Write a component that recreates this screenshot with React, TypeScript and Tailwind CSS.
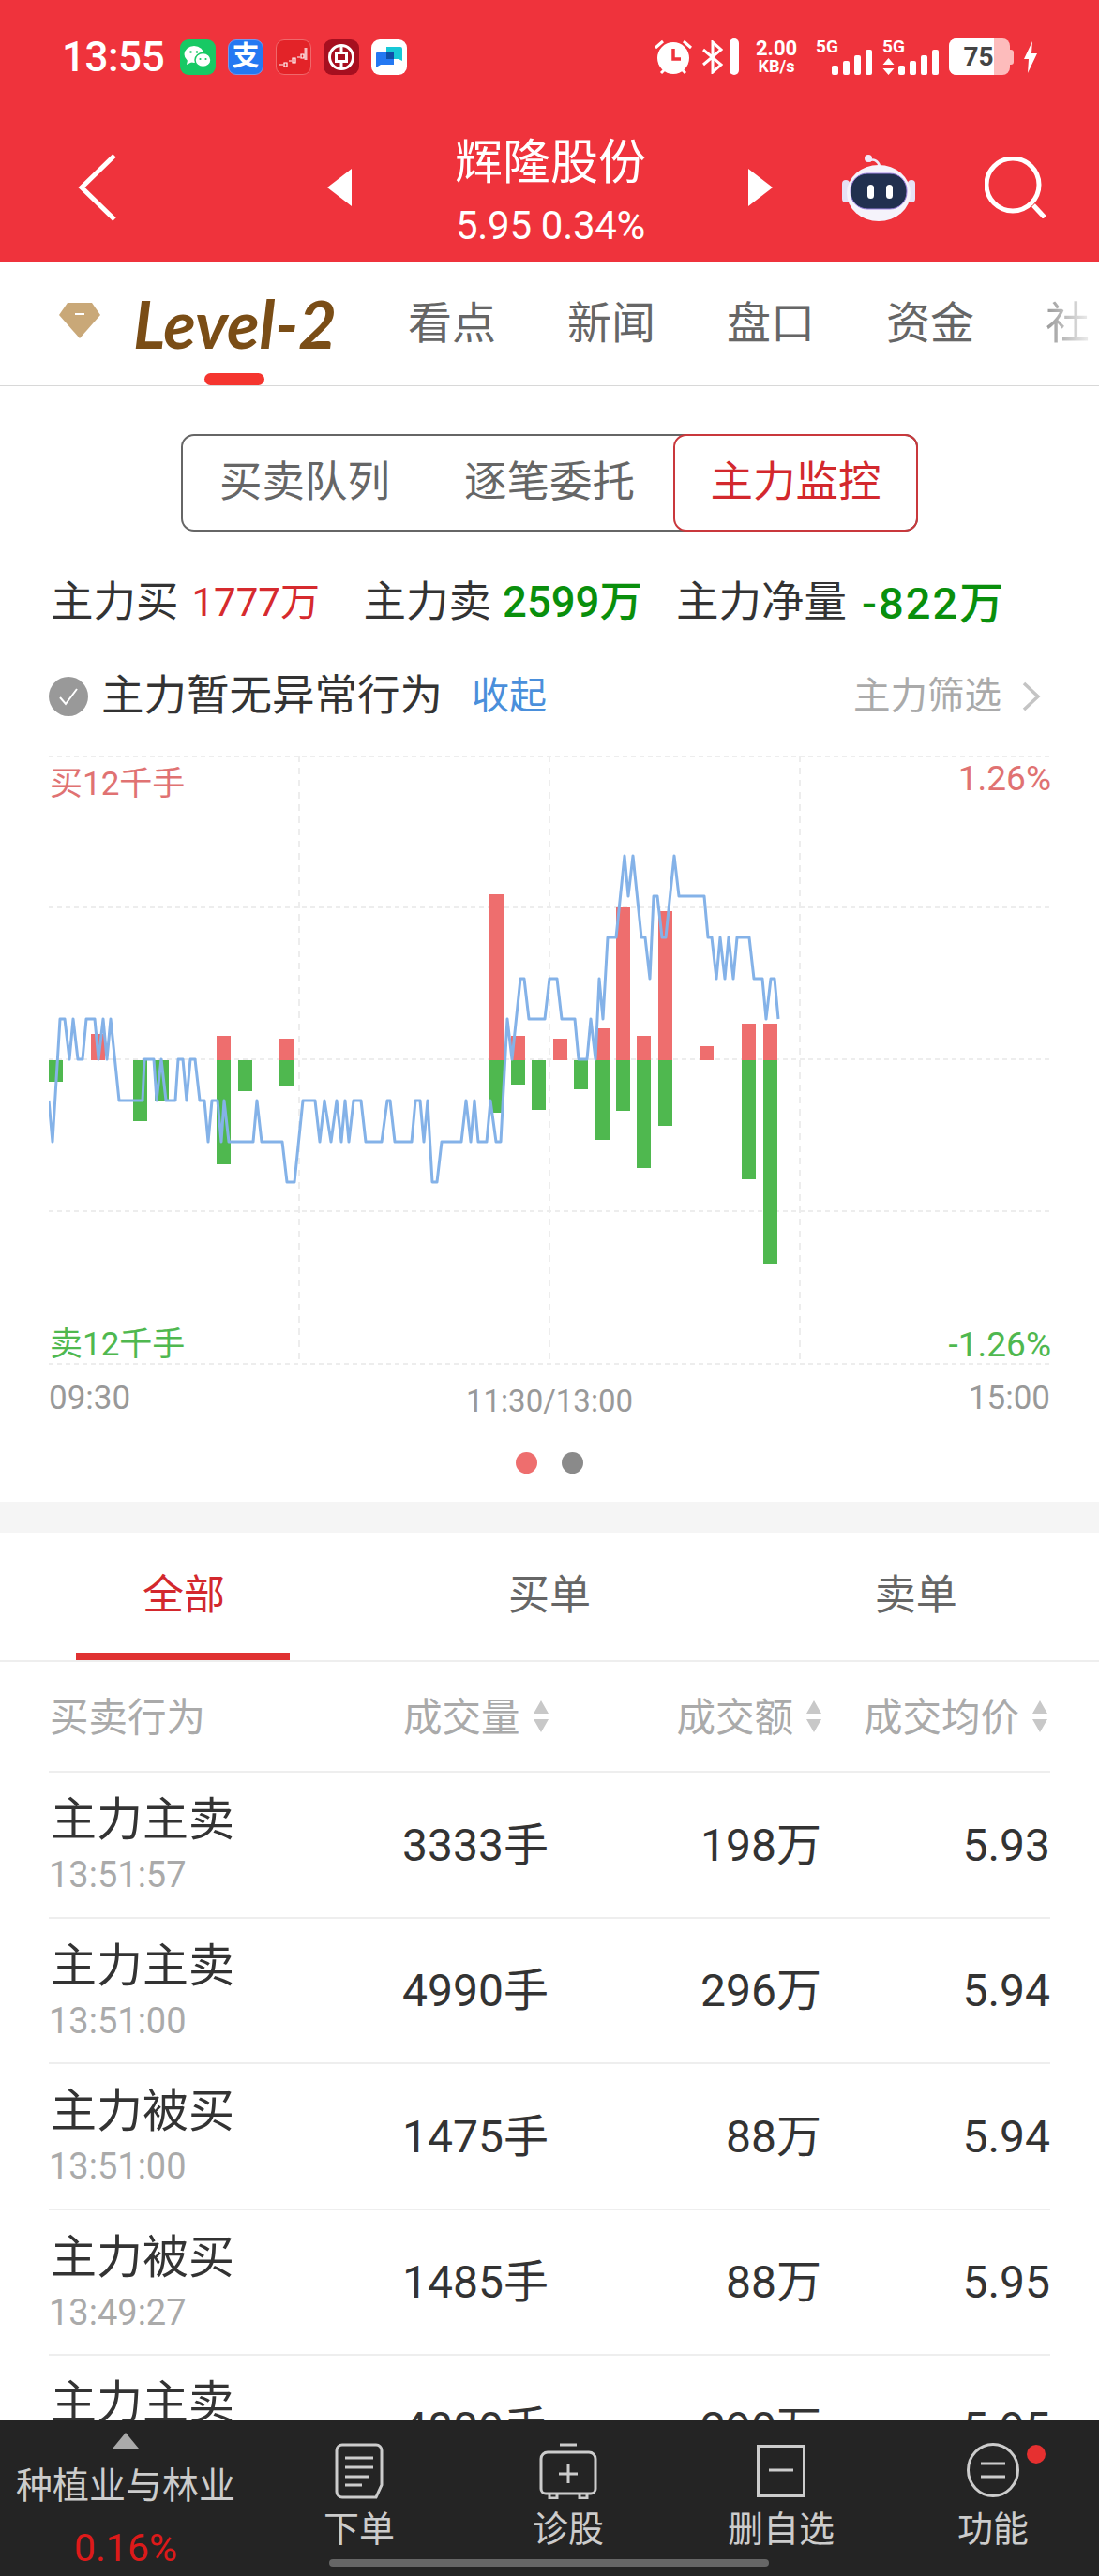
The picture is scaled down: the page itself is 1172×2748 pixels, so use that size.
import React from 'react';

const rows = [
    { act: '主力主卖', time: '13:51:57', vol: '3333手', amt: '198万', price: '5.93' },
    { act: '主力主卖', time: '13:51:00', vol: '4990手', amt: '296万', price: '5.94' },
    { act: '主力被买', time: '13:51:00', vol: '1475手', amt: '88万', price: '5.94' },
    { act: '主力被买', time: '13:49:27', vol: '1485手', amt: '88万', price: '5.95' },
    { act: '主力主卖', time: '13:48:30', vol: '4880手', amt: '290万', price: '5.95' },
];

// x, red top, green bottom (zero line is y=1130)
const bars: [number, number | null, number | null][] = [
    [52, null, 1153], [97, 1102, null], [142, null, 1195], [165, null, 1174], [231, 1104, 1241],
    [254, null, 1163], [298, 1107, 1157], [522, 953, 1186], [545, 1104, 1156], [567, null, 1183],
    [590, 1107, null], [612, null, 1161], [635, 1096, 1215], [657, 967, 1184], [679, 1104, 1245],
    [702, 971, 1200], [746, 1115, null], [791, 1091, 1257], [814, 1091, 1347],
];

const line = '52,1173 56,1217 64,1086 69,1086 74,1129 78,1086 83,1129 88,1129 92,1086 101,1086 105,1129 110,1086 114,1129 118,1086 127,1173 152,1173 154,1129 164,1129 167,1173 172,1129 177,1173 187,1173 190,1129 195,1129 199,1173 203,1129 208,1129 213,1173 218,1173 222,1217 226,1173 232,1173 236,1217 239,1173 244,1217 270,1217 274,1173 279,1217 301,1217 306,1260 314,1260 323,1173 336,1173 341,1217 346,1173 353,1217 359,1173 364,1217 368,1173 372,1217 377,1173 385,1173 390,1217 407,1217 413,1173 416,1173 421,1217 439,1217 443,1173 448,1173 452,1217 456,1173 461,1260 466,1260 471,1217 492,1217 497,1173 502,1217 506,1173 510,1217 519,1217 523,1173 529,1217 534,1217 541,1086 546,1129 555,1043 559,1043 564,1086 581,1086 586,1043 594,1043 599,1086 613,1086 617,1129 626,1129 630,1086 635,1129 639,1043 643,1086 648,999 657,999 666,912 670,955 675,912 684,999 688,999 693,1043 697,955 701,955 706,999 710,999 719,912 724,955 751,955 755,999 759,999 764,1043 768,999 773,1043 777,999 782,1043 786,999 799,999 804,1043 813,1043 817,1086 822,1043 826,1043 830,1086';

function SignalBars() {
    return (
        <div className="flex items-end gap-[5px]">
            <div className="w-[7px] h-[10px] rounded-[2px] bg-white" />
            <div className="w-[7px] h-[15px] rounded-[2px] bg-white" />
            <div className="w-[7px] h-[21px] rounded-[2px] bg-white" />
            <div className="w-[7px] h-[27px] rounded-[2px] bg-white" />
        </div>
    );
}

function StatusBar() {
    return (
        <div className="flex items-center h-[39px] mt-[41px] pl-[66px] text-white">
            <span className="shrink-0 text-[44px] leading-none font-medium w-[126px] tracking-[-0.5px]">13:55</span>
            {/* notification icons */}
            <div className="flex gap-[13px] shrink-0">
                <div className="w-[38px] h-[38px] rounded-[9px] bg-[#17c964] flex items-center justify-center">
                    <svg width="30" height="26" viewBox="0 0 30 26" fill="white">
                        <ellipse cx="11" cy="10" rx="10.5" ry="9" />
                        <path d="M4 16l-1 5 6-3z" />
                        <ellipse cx="20.5" cy="16" rx="8.5" ry="7.5" fill="white" stroke="#17c964" strokeWidth="1.5" />
                        <circle cx="7.5" cy="7.5" r="1.3" fill="#17c964" />
                        <circle cx="14" cy="7.5" r="1.3" fill="#17c964" />
                        <circle cx="17.5" cy="15" r="1.1" fill="#17c964" />
                        <circle cx="23.5" cy="15" r="1.1" fill="#17c964" />
                    </svg>
                </div>
                <div className="w-[38px] h-[38px] rounded-[9px] bg-[#2478f2] border border-[#7b95e6] flex items-center justify-center text-[29px] leading-none font-bold text-white">支</div>
                <div className="w-[38px] h-[38px] rounded-[9px] bg-[#e32328] border border-[#f0686b] flex items-center justify-center">
                    <svg width="32" height="26" viewBox="0 0 32 26" fill="none" stroke="white">
                        <path d="M1 21h4M6 19h3v4H6zM11 17h3M15 14h3v5h-3zM20 13h3M24 10h3v4h-3z" strokeWidth="1.2" />
                        <path d="M29 3v13" strokeWidth="3" strokeOpacity="0.7" />
                    </svg>
                </div>
                <div className="w-[38px] h-[38px] rounded-[9px] bg-[#a60f1f] flex items-center justify-center">
                    <svg width="30" height="30" viewBox="0 0 30 30" fill="none" stroke="white" strokeWidth="3">
                        <circle cx="15" cy="15" r="12.5" />
                        <rect x="9.5" y="10.5" width="11" height="9" />
                        <path d="M15 2v8M15 20v8" />
                    </svg>
                </div>
                <div className="w-[38px] h-[38px] rounded-[9px] bg-white flex items-center justify-center">
                    <svg width="32" height="26" viewBox="0 0 32 26">
                        <path d="M13 2h15a2 2 0 0 1 2 2v13l-4-2H13z" fill="#17c8d6" />
                        <path d="M3 8h16a2 2 0 0 1 2 2v11H7l-5 3V9a1 1 0 0 1 1-1z" fill="#2478f2" />
                        <rect x="13" y="8" width="8" height="7" fill="#0f4fa8" />
                    </svg>
                </div>
            </div>

            {/* system icons */}
            <svg className="ml-[264px] shrink-0" width="40" height="40" viewBox="0 0 40 40" fill="white">
                <circle cx="20" cy="21" r="17" />
                <path d="M20 11v11h8" stroke="#ef333c" strokeWidth="3.5" fill="none" />
                <path d="M1 10l8-7M39 10l-8-7M7 37l4-4M33 37l-4-4" stroke="white" strokeWidth="3" fill="none" />
            </svg>
            <svg className="ml-[11px] shrink-0" width="22" height="36" viewBox="0 0 22 36" fill="none" stroke="white" strokeWidth="3">
                <path d="M1 10l19 16-9 8V2l9 8L1 26" />
            </svg>
            <div className="ml-[7px] shrink-0 w-[10px] h-[39px] rounded-full bg-white" />
            <div className="ml-[15px] shrink-0 w-[50px] flex flex-col items-center text-white font-bold">
                <span className="text-[22px] leading-[21px]">2.00</span>
                <span className="text-[18px] leading-[18px]">KB/s</span>
            </div>
            <div className="ml-[17px] shrink-0 w-[60px] h-[39px] relative">
                <span className="absolute left-0 top-0 text-[19px] leading-[17px] font-bold">5G</span>
                <div className="absolute right-0 bottom-0">
                    <SignalBars />
                </div>
            </div>
            <div className="ml-[11px] shrink-0 w-[60px] h-[39px] relative">
                <span className="absolute left-0 top-0 text-[19px] leading-[17px] font-bold">5G</span>
                <svg className="absolute left-0 bottom-0" width="13" height="18" viewBox="0 0 13 18" fill="white">
                    <path d="M6.5 0l6 7H.5zM6.5 18l6-7H.5z" />
                </svg>
                <div className="absolute right-0 bottom-0">
                    <SignalBars />
                </div>
            </div>
            <div className="ml-[11px] shrink-0 w-[65px] h-[39px] rounded-[8px] overflow-hidden flex bg-[#fdbcbc] relative">
                <div className="w-[48px] h-full bg-white" />
                <span className="absolute inset-0 flex items-center justify-center text-[#444] text-[28px] font-bold leading-none pr-[2px]">75</span>
            </div>
            <div className="shrink-0 w-[4px] h-[16px] bg-[#fdbcbc] rounded-r-[3px]" />
            <svg className="ml-[11px] shrink-0" width="14" height="34" viewBox="0 0 14 34" fill="white">
                <path d="M9 0L0 19h5l-1 15 10-21H8z" />
            </svg>
        </div>
    );
}

function TitleBar() {
    return (
        <div className="flex items-center h-[120px] mt-[60px] text-white">
            <svg className="ml-[83px] shrink-0" width="42" height="72" viewBox="0 0 42 72" fill="none" stroke="white" strokeWidth="5">
                <path d="M39 2L4 36l35 34" />
            </svg>
            <svg className="ml-[224px] shrink-0" width="26" height="40" viewBox="0 0 26 40" fill="white">
                <path d="M26 0L0 20l26 20z" />
            </svg>
            <div className="ml-[112px] shrink-0 w-[200px] flex flex-col items-center pt-[7px]">
                <span className="text-[51px] leading-[60px] whitespace-nowrap">辉隆股份</span>
                <span className="text-[42px] leading-[46px] whitespace-nowrap mt-[14px] tracking-[-0.3px]">5.95 0.34%</span>
            </div>
            <svg className="ml-[111px] shrink-0" width="26" height="40" viewBox="0 0 26 40" fill="white">
                <path d="M0 0l26 20L0 40z" />
            </svg>
            {/* robot */}
            <svg className="ml-[74px] shrink-0" width="78" height="72" viewBox="0 0 78 72">
                <path d="M29 8c4-3 9-1 11 5" stroke="#f0eafa" strokeWidth="2.5" fill="none" />
                <circle cx="28" cy="5" r="4" fill="#f0eafa" />
                <rect x="0" y="28" width="8" height="24" rx="4" fill="#e6e2f5" />
                <rect x="70" y="28" width="8" height="24" rx="4" fill="#e6e2f5" />
                <ellipse cx="39" cy="42" rx="34" ry="30" fill="#f5f3fb" />
                <rect x="9" y="21" width="60" height="38" rx="18" fill="#21304f" stroke="#9d82e0" strokeWidth="1" />
                <rect x="27" y="33" width="7" height="15" rx="3.5" fill="white" />
                <rect x="47" y="33" width="7" height="15" rx="3.5" fill="white" />
            </svg>
            <svg className="ml-[74px] shrink-0" width="66" height="66" viewBox="0 0 66 66" fill="none" stroke="white" strokeWidth="5">
                <circle cx="30" cy="30" r="28" />
                <path d="M52 52l12 13" />
            </svg>
        </div>
    );
}

function LevelTabs() {
    return (
        <div className="relative h-[132px] border-b border-[#d8d8d8] flex items-center overflow-hidden">
            <svg className="ml-[63px] mb-[8px] shrink-0" width="44" height="38" viewBox="0 0 44 38">
                <path d="M9 0h26l9 13-22 25L0 13z" fill="#c9a878" />
                <path d="M17 12h10" stroke="white" strokeWidth="2" />
            </svg>
            <span className="ml-[35px] mb-[2px] shrink-0 w-[215px] text-[#7a4d16] text-[71px] leading-none font-['Lato',sans-serif] font-bold italic whitespace-nowrap">Level-2</span>
            <div className="ml-[78px] flex gap-[76px] text-[47px] leading-none text-[#666] mb-[2px] whitespace-nowrap shrink-0">
                <span>看点</span>
                <span>新闻</span>
                <span>盘口</span>
                <span>资金</span>
                <span className="bg-gradient-to-r from-[#999999] to-[#eeeeee] bg-clip-text text-transparent">社</span>
            </div>
            <div className="absolute left-[218px] bottom-0 w-[64px] h-[13px] rounded-full bg-[#f5352f]" />
        </div>
    );
}

function Segmented() {
    return (
        <div className="mt-[51px] ml-[193px] w-[786px] h-[104px] rounded-[14px] border-2 border-[#666] flex text-[45.5px] leading-none">
            <div className="w-[149px] pl-[39px] flex items-center text-[#666] whitespace-nowrap">买卖队列</div>
            <div className="w-[375px] flex items-center text-[#666] whitespace-nowrap pl-[151px]">逐笔委托</div>
            <div className="-my-[2px] w-[262px] -mr-[2px] rounded-[14px] border-2 border-[#c9383c] flex items-center justify-center text-[#d3282d] whitespace-nowrap">主力监控</div>
        </div>
    );
}

function Summary() {
    return (
        <div className="mt-[54px] pl-[54px] h-[44px] flex items-center text-[45.5px] leading-none text-[#333] whitespace-nowrap">
            <span>主力买</span>
            <span className="ml-[14px] text-[42px] text-[#d62a2e] w-[183px]">1777万</span>
            <span>主力卖</span>
            <span className="ml-[12px] text-[#098f0c] w-[185px] font-medium">2599万</span>
            <span>主力净量</span>
            <span className="ml-[16px] text-[47px] tracking-[2px] text-[#098f0c] font-medium">-822万</span>
        </div>
    );
}

function AlertRow() {
    return (
        <div className="mt-[56px] h-[44px] flex items-center pl-[52px] pr-[62px] whitespace-nowrap">
            <div className="w-[42px] h-[42px] rounded-full bg-[#999] flex items-center justify-center">
                <svg width="24" height="22" viewBox="0 0 24 22" fill="none" stroke="white" strokeWidth="2">
                    <path d="M3 12l6 7L21 3" />
                </svg>
            </div>
            <span className="ml-[14px] text-[45.5px] leading-none text-[#333]">主力暂无异常行为</span>
            <span className="ml-[31px] text-[40px] leading-none text-[#4a8fdb]">收起</span>
            <span className="ml-auto text-[39.5px] leading-none text-[#aaa]">主力筛选</span>
            <svg className="ml-[22px]" width="20" height="32" viewBox="0 0 20 32" fill="none" stroke="#c4c4c4" strokeWidth="3.5">
                <path d="M2 2l15 14L2 30" />
            </svg>
        </div>
    );
}

function Chart() {
    return (
        <div className="relative mt-[41px] mx-[52px] h-[651px]">
            <svg className="block" width="1068" height="651" viewBox="52 805 1068 651">
                {[806, 967, 1129, 1291, 1454].map((y) => (
                    <line key={y} x1="52" x2="1120" y1={y} y2={y} stroke="#ededed" strokeWidth="2" strokeDasharray="5 4" />
                ))}
                {[319, 586, 853].map((x) => (
                    <line key={x} x1={x} x2={x} y1="805" y2="1452" stroke="#ededed" strokeWidth="2" strokeDasharray="7 6" />
                ))}
                {bars.map(([x, top, bottom]) => (
                    <g key={x}>
                        {top !== null && <rect x={x} y={top} width="15" height={1130 - top} fill="#ee6e6e" />}
                        {bottom !== null && <rect x={x} y="1130" width="15" height={bottom - 1130} fill="#4fb84f" />}
                    </g>
                ))}
                <polyline points={line} fill="none" stroke="#84b2e8" strokeWidth="3" strokeLinejoin="round" />
            </svg>
            <span className="absolute left-[1px] top-[11px] text-[35px] leading-[40px] text-[#e07272] whitespace-nowrap">买12千手</span>
            <span className="absolute right-[-1px] top-[5px] text-[37px] leading-[40px] text-[#e07272]">1.26%</span>
            <span className="absolute left-[1px] bottom-[2px] text-[35px] leading-[40px] text-[#4fb84f] whitespace-nowrap">卖12千手</span>
            <span className="absolute right-[-1px] bottom-[2px] text-[37px] leading-[40px] text-[#4fb84f]">-1.26%</span>
        </div>
    );
}

function AxisLabels() {
    return (
        <>
            <div className="mt-[17px] px-[52px] grid grid-cols-3 text-[35px] leading-[36px] text-[#999]">
                <span>09:30</span>
                <span className="mt-[3px] text-[33px] text-center">11:30/13:00</span>
                <span className="text-right">15:00</span>
            </div>
            <div className="mt-[36px] flex justify-center gap-[26px]">
                <div className="w-[23px] h-[23px] rounded-full bg-[#ee6e6e]" />
                <div className="w-[23px] h-[23px] rounded-full bg-[#8a8a8a]" />
            </div>
        </>
    );
}

function OrderTabs() {
    return (
        <div className="relative h-[138px] border-b-2 border-[#eeeeee] grid grid-cols-3 text-[44px] leading-none text-[#666]">
            <div className="flex items-center justify-center pb-[2px] text-[#d3282d] w-[392px]">全部</div>
            <div className="flex items-center justify-center pb-[2px]">买单</div>
            <div className="flex items-center justify-center pb-[2px]">卖单</div>
            <div className="absolute left-[81px] bottom-0 w-[228px] h-[8px] bg-[#e03232]" />
        </div>
    );
}

function SortArrows() {
    return (
        <svg className="ml-[13px] shrink-0" width="18" height="34" viewBox="0 0 18 34" fill="#c8c8c8">
            <path d="M9 0l8 14H1zM9 34l8-14H1z" />
        </svg>
    );
}

function TableHeader() {
    return (
        <div className="mx-[52px] h-[118px] border-b-2 border-[#eeeeee] flex items-center text-[41.5px] leading-none text-[#aaa] whitespace-nowrap">
            <span className="ml-[1px] mt-[3px] w-[377px] shrink-0">买卖行为</span>
            <span className="mt-[3px]">成交量</span>
            <SortArrows />
            <span className="ml-[136px] mt-[3px]">成交额</span>
            <SortArrows />
            <span className="ml-[44px] mt-[3px]">成交均价</span>
            <SortArrows />
        </div>
    );
}

function TradeRow({ act, time, vol, amt, price }: (typeof rows)[number]) {
    return (
        <div className="h-[155.5px] border-b-2 border-[#eeeeee] grid grid-cols-[300px_233px_291px_244px] items-center text-[#333] whitespace-nowrap">
            <div className="flex flex-col pl-[2px]">
                <span className="text-[49px] leading-[58px]">{act}</span>
                <span className="text-[38px] leading-[44px] text-[#aaa] -ml-[2px] mt-[7px]">{time}</span>
            </div>
            <span className="text-[48px] leading-none text-right mt-[2px]">{vol}</span>
            <span className="text-[48px] leading-none text-right mt-[2px]">{amt}</span>
            <span className="text-[48px] leading-none text-right mt-[2px]">{price}</span>
        </div>
    );
}

function BottomBar() {
    return (
        <div className="absolute inset-x-0 bottom-0 h-[166px] bg-[#242424] text-[#cccccc] whitespace-nowrap">
            <div className="absolute left-0 top-0 w-[268px] flex flex-col items-center">
                <div className="mt-[13px] w-0 h-0 border-x-[14px] border-x-transparent border-b-[17px] border-b-[#aaaaaa]" />
                <span className="mt-[18px] text-[39px] leading-[44px]">种植业与林业</span>
                <span className="mt-[22px] text-[41px] leading-[44px] text-[#dd1a1a]">0.16%</span>
            </div>
            <div className="ml-[268px] pt-[24px] flex">
                <div className="w-[230px] flex flex-col items-center">
                    <svg width="52" height="60" viewBox="0 0 52 60" fill="none" stroke="#cccccc" strokeWidth="3">
                        <path d="M8 2h36a6 6 0 0 1 6 6v37l-6 13H8a6 6 0 0 1-6-6V8a6 6 0 0 1 6-6z" />
                        <path d="M11 16h30M11 26h30M11 36h25M11 45h18" />
                    </svg>
                    <span className="mt-[12px] text-[38px] leading-[40px]">下单</span>
                </div>
                <div className="-ml-[2px] w-[220px] flex flex-col items-center">
                    <svg width="62" height="60" viewBox="0 0 62 60" fill="none" stroke="#cccccc" strokeWidth="3">
                        <path d="M22 2h18M9 10h44a7 7 0 0 1 7 7v32a5 5 0 0 1-5 5H7a5 5 0 0 1-5-5V17a7 7 0 0 1 7-7zM31 23v20M21 33h20" />
                        <path d="M11 55v4h8v-4M43 55v4h8v-4" />
                    </svg>
                    <span className="mt-[12px] text-[38px] leading-[40px]">诊股</span>
                </div>
                <div className="-ml-[2px] w-[238px] flex flex-col items-center">
                    <svg width="52" height="56" viewBox="0 0 52 56" fill="none" stroke="#cccccc" strokeWidth="3" className="mt-[2px]">
                        <rect x="1.5" y="1.5" width="49" height="53" />
                        <path d="M13 27h26" />
                    </svg>
                    <span className="mt-[14px] text-[38px] leading-[40px]">删自选</span>
                </div>
                <div className="relative w-[206px] flex flex-col items-center pl-[8px]">
                    <svg width="56" height="58" viewBox="0 0 56 58" fill="none" stroke="#cccccc" strokeWidth="3">
                        <ellipse cx="28" cy="29" rx="26.5" ry="27.5" />
                        <path d="M15 22h26M15 36h26" />
                    </svg>
                    <span className="mt-[14px] text-[38px] leading-[40px]">功能</span>
                    <div className="absolute left-[143px] top-[2px] w-[20px] h-[20px] rounded-full bg-[#e63030]" />
                </div>
            </div>
            <div className="absolute left-[351px] top-[148px] w-[469px] h-[8px] rounded-full bg-[#666666]" />
        </div>
    );
}

export default function App() {
    return (
        <div className="relative w-[1172px] h-[2748px] overflow-hidden bg-white font-['Roboto','Noto_Sans_CJK_SC',sans-serif]">
            <div className="h-[280px] bg-[#ef333c] overflow-hidden">
                <StatusBar />
                <TitleBar />
            </div>
            <LevelTabs />
            <Segmented />
            <Summary />
            <AlertRow />
            <Chart />
            <AxisLabels />

            <div className="mt-[30px] h-[33px] bg-[#f5f5f5]" />
            <OrderTabs />
            <TableHeader />
            <div className="mx-[52px]">
                {rows.map((r, i) => (
                    <TradeRow key={i} {...r} />
                ))}
            </div>

            <BottomBar />
        </div>
    );
}
